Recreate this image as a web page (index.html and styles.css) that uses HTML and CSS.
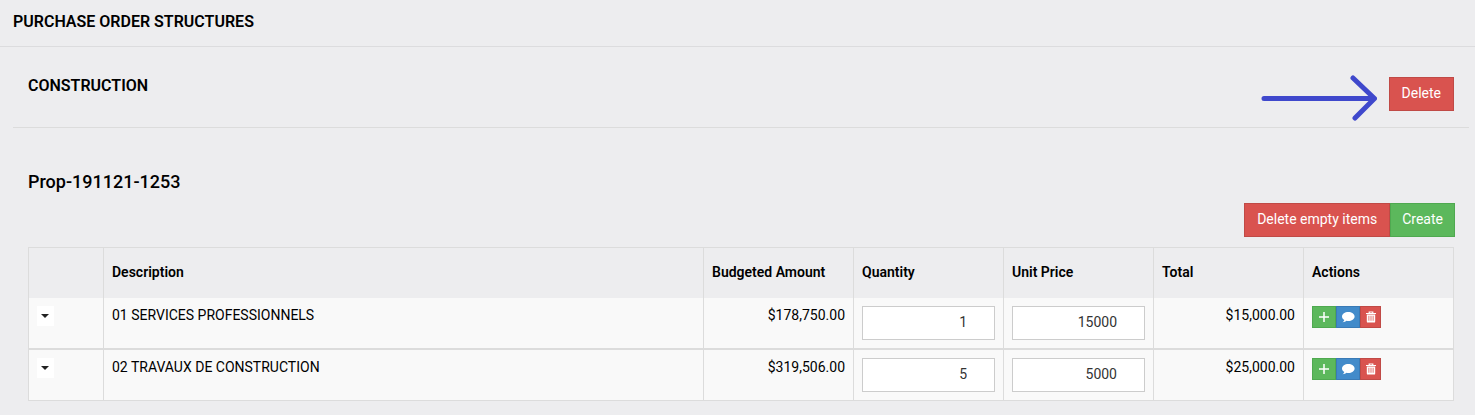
FILE: index.html
```html
<!DOCTYPE html>
<html lang="en">
<head>
<meta charset="utf-8">
<title>Purchase Order Structures</title>
<link rel="stylesheet" href="styles.css">
</head>
<body>
<svg class="sprite" aria-hidden="true">
  <symbol id="plus" viewBox="0 0 12 12"><path d="M6 1v10M1 6h10" fill="none" stroke="currentColor" stroke-width="1.5"/></symbol>
  <symbol id="comment" viewBox="0 0 14 14"><path d="M7.300 2C3.900 2 1 4 1 6.500c0 1.400.8 2.600 2.300 3.400-.2.900-.8 1.700-1.700 2.300 1.700 0 3.100-.6 4-1.400.5.1 1.100.2 1.700.2 3.400 0 6.300-2 6.300-4.500S10.700 2 7.300 2z" fill="currentColor"/></symbol>
  <symbol id="trash" viewBox="0 0 12 12"><path d="M1 2.500h10M4.200 2.200V1h3.600v1.200" fill="none" stroke="currentColor" stroke-width="1.200"/><path fill-rule="evenodd" d="M1.800 3.400h8.400V10.400a1.200 1.200 0 0 1-1.200 1.200H3a1.200 1.200 0 0 1-1.200-1.200zM3.500 4.800v5h.8v-5zM5.600 4.800v5h.8v-5zM7.700 4.800v5h.8v-5z" fill="currentColor"/></symbol>
</svg>
<header class="page-header"><h1 class="title">PURCHASE ORDER STRUCTURES</h1></header>
<main class="panel">
  <div class="panel-header">
    <h2 class="title">CONSTRUCTION</h2>
    <div class="panel-action">
      <svg class="arrow" viewBox="0 0 116 46" aria-hidden="true"><path d="M3 23.500H113M92 3l21.500 20.500L94 43" fill="none" stroke="#3f48cc" stroke-width="5" stroke-linecap="round" stroke-linejoin="round"/></svg>
      <button class="btn danger" type="button">Delete</button>
    </div>
  </div>
  <section class="panel-body">
    <h3 class="proposal">Prop-191121-1253</h3>
    <div class="toolbar">
      <button class="btn danger" type="button">Delete empty items</button><button class="btn compact success" type="button">Create</button>
    </div>
    <table class="items">
      <colgroup><col class="col-toggle"><col><col class="col-data"><col class="col-data"><col class="col-data"><col class="col-data"><col class="col-data"></colgroup>
      <thead>
        <tr><th></th><th>Description</th><th>Budgeted Amount</th><th>Quantity</th><th>Unit Price</th><th>Total</th><th>Actions</th></tr>
      </thead>
      <tbody>
        <tr>
          <td><button class="toggle" type="button" aria-label="Expand row"><span class="caret"></span></button></td>
          <td>01 SERVICES PROFESSIONNELS</td>
          <td class="amount">$178,750.00</td>
          <td><input class="field" type="text" aria-label="Quantity" value="1"></td>
          <td><input class="field" type="text" aria-label="Unit Price" value="15000"></td>
          <td class="amount">$15,000.00</td>
          <td><div class="actions">
            <button class="icon-btn success" type="button" aria-label="Add"><svg class="icon"><use href="#plus"/></svg></button>
            <button class="icon-btn primary" type="button" aria-label="Comment"><svg class="icon wide"><use href="#comment"/></svg></button>
            <button class="icon-btn danger" type="button" aria-label="Delete"><svg class="icon"><use href="#trash"/></svg></button>
          </div></td>
        </tr>
        <tr>
          <td><button class="toggle" type="button" aria-label="Expand row"><span class="caret"></span></button></td>
          <td>02 TRAVAUX DE CONSTRUCTION</td>
          <td class="amount">$319,506.00</td>
          <td><input class="field" type="text" aria-label="Quantity" value="5"></td>
          <td><input class="field" type="text" aria-label="Unit Price" value="5000"></td>
          <td class="amount">$25,000.00</td>
          <td><div class="actions">
            <button class="icon-btn success" type="button" aria-label="Add"><svg class="icon"><use href="#plus"/></svg></button>
            <button class="icon-btn primary" type="button" aria-label="Comment"><svg class="icon wide"><use href="#comment"/></svg></button>
            <button class="icon-btn danger" type="button" aria-label="Delete"><svg class="icon"><use href="#trash"/></svg></button>
          </div></td>
        </tr>
      </tbody>
    </table>
  </section>
</main>
</body>
</html>
```
FILE: styles.css
```css
* { box-sizing: border-box; }
body {
  margin: 0;
  background: #ededef;
  color: #000;
  font: 14px/20px Roboto, "Liberation Sans", sans-serif;
}
.sprite { position: absolute; width: 0; height: 0; }
.title { margin: 0; font-size: 16px; line-height: 18px; font-weight: 600; }
.page-header { padding: 13px 13px 15px; border-bottom: 1px solid #dcdcde; }
.panel { margin: 0 6px 0 13px; }
.panel-header {
  display: flex;
  justify-content: space-between;
  align-items: flex-start;
  padding: 30px 15px 16px;
  border-bottom: 1px solid #dcdcdc;
}
.panel-action { position: relative; display: flex; }
.arrow {
  position: absolute;
  right: 100%;
  top: -2px;
  width: 116px;
  height: 46px;
  margin-right: 12px;
}
.btn {
  height: 34px;
  padding: 0 12px 2px;
  border: 1px solid;
  border-radius: 0;
  font: inherit;
  color: #fff;
}
.btn.compact { padding: 0 11px 2px; }
.icon-btn {
  display: flex;
  align-items: center;
  justify-content: center;
  width: 24px;
  height: 22px;
  padding: 0;
  border: 1px solid;
  border-radius: 0;
  color: #fff;
}
.danger { background: #d9534f; border-color: #c04a46; }
.success { background: #5cb85c; border-color: #4fa950; }
.primary { background: #428bca; border-color: #3a7ab5; }
.icon-btn.danger { width: 21px; }
.panel-body { padding: 44px 15px 14px; }
.proposal { margin: 0; font-size: 18px; line-height: 20px; font-weight: 500; }
.toolbar { display: flex; justify-content: flex-end; margin-right: -1px; padding: 11px 0 10px; }
.items {
  width: 100%;
  table-layout: fixed;
  border-collapse: separate;
  border-spacing: 0;
  border: solid #dcdcdc;
  border-width: 1px 0 1px 1px;
}
.col-toggle { width: 75px; }
.col-data { width: 150px; }
.items th, .items td { border-right: 1px solid #dcdcdc; text-align: left; }
.items th { padding: 14px 8px 16px; font-weight: 600; }
.items td { padding: 8px; background: #f9f9f9; vertical-align: top; line-height: 18px; }
.items tbody tr:not(:last-child) td { border-bottom: 2px solid #dcdcdc; }
.items td.amount { text-align: right; }
.field {
  display: block;
  width: 100%;
  height: 34px;
  padding: 0 27px 2px 12px;
  border: 1px solid #ccc;
  border-radius: 0;
  background: #fff;
  color: #333;
  font: inherit;
  text-align: right;
}
.toggle {
  display: flex;
  align-items: center;
  justify-content: center;
  width: 17px;
  height: 20px;
  padding: 0 1px 0 0;
  border: 0;
  background: #fff;
}
.caret {
  border: 4px solid transparent;
  border-top-color: #222;
  border-bottom: 0;
}
.actions { display: flex; }
.icon { width: 12px; height: 12px; }
.icon.wide { width: 14px; height: 14px; }
```
